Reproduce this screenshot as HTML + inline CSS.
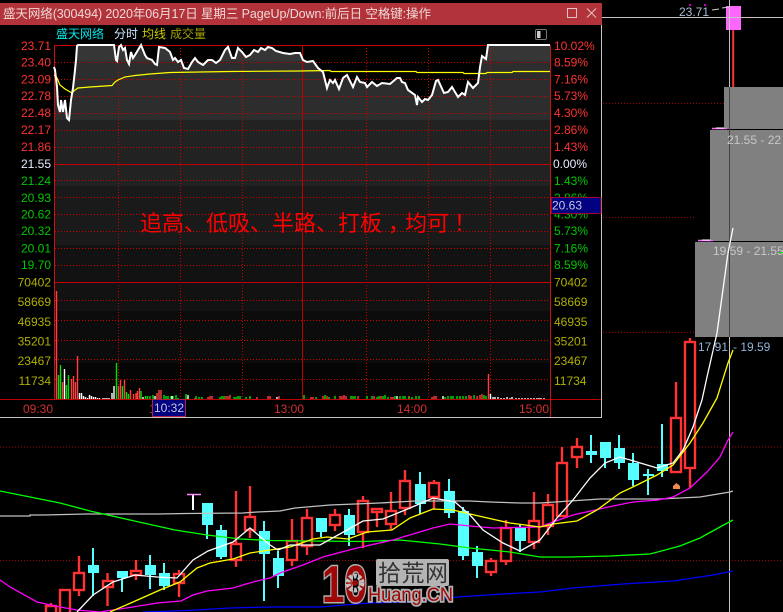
<!DOCTYPE html>
<html lang="zh"><head><meta charset="utf-8"><title>盛天网络</title>
<style>
html,body{margin:0;padding:0;background:#000;width:783px;height:612px;overflow:hidden}
svg{display:block;position:absolute;left:0;top:0}
text{font-family:"Liberation Sans","Noto Sans CJK SC",sans-serif;font-size:12px}
.l{text-anchor:end}
.r{fill:#ff3333}.g{fill:#00c800}.y{fill:#b0b000}
.cy{fill:#55ffff}
.cw{stroke:#55ffff;stroke-width:2}
.rw{stroke:#ff3333;stroke-width:2.400}
.ma{fill:none;stroke-width:1.300}
</style></head><body>
<svg width="783" height="612" viewBox="0 0 783 612" xmlns="http://www.w3.org/2000/svg" shape-rendering="auto">
<!-- grey stacked blocks -->
<g fill="#808080"><rect x="724" y="87" width="59" height="42"/><rect x="710" y="130" width="73" height="111"/><rect x="695" y="242" width="88" height="95"/></g>
<path d="M710 129.500H783M695 241.500H783" stroke="#000" stroke-width="1"/>
<path d="M712 128.500H727M698 240.500H713" stroke="#ff66ff" stroke-width="1.500"/>
<path d="M716 128H724M702 240H710" stroke="#fff" stroke-width="1"/>
<!-- main dotted lines -->
<path d="M603 103.500H724M603 217.500H695M603 332.500H695M0 447H783M0 560.500H783" stroke="#a00000" stroke-width="1" stroke-dasharray="1 2"/>
<!-- crosshair -->
<path d="M729.500 0V612" stroke="#c4c4c4" stroke-width="1"/>
<path d="M729.500 87V337" stroke="#444" stroke-width="1"/>
<path d="M602 17.500H783" stroke="#c4c4c4" stroke-width="1"/>
<!-- candles: wicks -->
<path class="rw" d="M51 603V612M65 590V612M79 556V596M107.500 573V606M136 560V580M179 570V597M236 491V567M250 486V538M292 519V566M307 509V555M335 509V531M363 496V548M377 509V527M391 492V530M405 470V515M434 480V509M491 558V576M506 520V565M534 492V549M548 494V535M562 447V516M577 438V468M676 382V418M690 338V488"/>
<path class="cw" d="M93 548V596M122 571V592M150 555V589M164 563V590M207 525V539M221 525V559M264 521V601M278 551V588M321 532V537M349 509V546M420 472V514M449 479V518M463 507V560M477 546V578M520 525V552M591 435V463M605 458V468M619 435V469M633 453V486M648 469V495M662 424V477"/>
<path d="M193 495V510" stroke="#fff" stroke-width="2"/>
<path d="M187 494.500H201" stroke="#ff88ff" stroke-width="1.500"/>
<!-- candles: cyan bodies -->
<g class="cy">
<rect x="88" y="565" width="11" height="8"/><rect x="117" y="571" width="11" height="7"/><rect x="145" y="565" width="11" height="10"/><rect x="159" y="573" width="11" height="13"/><rect x="202" y="503" width="11" height="22"/><rect x="216" y="530" width="11" height="27"/><rect x="259" y="531" width="11" height="23"/><rect x="273" y="558" width="11" height="18"/><rect x="316" y="518" width="11" height="14"/><rect x="344" y="515" width="11" height="20"/><rect x="415" y="484" width="11" height="20"/><rect x="444" y="491" width="11" height="22"/><rect x="458" y="511" width="11" height="45"/><rect x="472" y="552" width="11" height="14"/><rect x="515" y="528" width="11" height="13"/><rect x="586" y="451" width="11" height="4"/><rect x="600" y="442" width="11" height="16"/><rect x="614" y="448" width="11" height="15"/><rect x="628" y="463" width="11" height="17"/><rect x="643" y="474" width="11" height="2"/><rect x="657" y="464" width="11" height="7"/>
</g>
<!-- candles: hollow red bodies -->
<g fill="#000" stroke="#ff3333" stroke-width="2.400">
<rect x="46" y="606" width="10" height="10"/><rect x="60" y="590" width="10" height="26"/><rect x="74" y="573" width="10" height="17"/><rect x="103" y="581" width="10" height="6"/><rect x="131" y="571" width="10" height="4"/><rect x="174" y="574" width="10" height="9"/><rect x="231" y="544" width="10" height="16"/><rect x="245" y="517" width="10" height="13"/><rect x="287" y="541" width="10" height="19"/><rect x="302" y="518" width="10" height="28"/><rect x="330" y="515" width="10" height="10"/><rect x="358" y="501" width="10" height="31"/><rect x="372" y="509" width="10" height="3"/><rect x="386" y="511" width="10" height="13"/><rect x="400" y="481" width="10" height="27"/><rect x="429" y="483" width="10" height="14"/><rect x="486" y="561" width="10" height="11"/><rect x="501" y="528" width="10" height="33"/><rect x="529" y="521" width="10" height="21"/><rect x="543" y="505" width="10" height="21"/><rect x="557" y="463" width="10" height="53"/><rect x="572" y="447" width="10" height="10"/><rect x="671" y="418" width="10" height="54"/><rect x="685" y="342" width="10" height="126"/>
</g>
<polygon points="673,489 673,486 676.500,483 680,486 680,489" fill="#f08a50"/>
<!-- MAs -->
<polyline class="ma" stroke="#c0c0c0" points="0,516 30,516 30,515 44,515 86,514 158,514 186,513.500 243,513 257,512 280,511 295,508 330,505 380,503 415,501 470,501 490,502 520,503 540,503 600,499 660,499 700,497 730,492 733,491"/>
<polyline class="ma" stroke="#00ff00" points="0,491 30,497 60,503 90,511 130,520 175,530 207,535 240,539 270,540.500 310,541 365,541.500 400,540 440,544 470,548 510,552 540,557 570,557 610,556 650,554 680,546 700,538 720,527 733,520"/>
<polyline class="ma" stroke="#ff00ff" points="0,580 10,587 37,602 60,607 77,610 100,612 133,607 157,603 181,601 193,595 207,591 233,588 253,582 270,578 280,573 303,565 323,557 353,549 393,540 433,528 450,524 470,526 493,528 540,527 553,522 573,515 613,506 633,502 658,500 673,497 690,488 707,472 720,457 728,440 733,432"/>
<polyline class="ma" stroke="#0000ff" points="143,612 187,610.500 230,608 270,607 320,607 370,603 410,602 457,597 503,594 540,592 573,588 623,584 673,581 713,575 733,571"/>
<polyline class="ma" stroke="#ffff00" points="110,612 133,602 160,590 180,582 197,568 210,563 233,559 250,553 270,550 290,547 313,539 327,537 348,539 367,532 392,530 410,518 433,509 453,510 483,517 510,523 540,527 553,524 577,521 597,510 620,493 637,485 657,475 673,465 690,443 703,423 717,398 728,363 733,350"/>
<polyline class="ma" stroke="#ffffff" points="77,612 93,595 113,582 135,575 157,577 177,578 193,560 208,551 233,542 250,528 270,545 278,550 290,545 320,545 347,530 363,521 383,519 410,508 433,498 455,502 470,515 483,530 503,543 520,551 540,540 557,518 573,500 590,478 605,463 620,457 637,462 657,468 673,463 683,450 693,427 702,400 707,377 717,333 728,253 733,228"/>
<!-- top pink candle -->
<path d="M733.200 30V87" stroke="#ff3333" stroke-width="2"/>
<rect x="726" y="6" width="15" height="24" fill="#ff66ff"/>
<path d="M729.500 0V30" stroke="#c4c4c4"/><path d="M726 17.500H741" stroke="#c4c4c4"/>
<circle cx="690" cy="5" r="1" fill="#ff00ff"/><circle cx="705" cy="5" r="1" fill="#ff00ff"/>
<path d="M712 10L719 9M722 8L729 7" stroke="#ccc" stroke-width="1"/>
<text x="679" y="16" fill="#a9bdd4" style="font-size:12px">23.71</text>
<text x="727" y="144" fill="#c8c8c8">21.55 - 22</text>
<text x="713" y="255" fill="#c8c8c8">19.59 - 21.55</text>
<path d="M780 252.500H783" stroke="#0f0"/>
<text x="698" y="351" fill="#8fb4d8">17.91</text><text x="733" y="351" fill="#8fb4d8">- 19.59</text>

<!-- window -->
<rect x="0" y="25" width="601" height="392" fill="#000"/>
<rect x="0" y="3" width="602" height="22" fill="#b23339"/>
<path d="M601.500 25V418M0 417.500H602" stroke="#c4c4c4"/>
<text x="3" y="18" fill="#f0d8d8" style="font-size:12.500px" textLength="428" lengthAdjust="spacing">盛天网络(300494) 2020年06月17日 星期三 PageUp/Down:前后日 空格键:操作</text>
<rect x="567.500" y="8.500" width="9" height="9" fill="none" stroke="#e3c4c4"/>
<path d="M587 8.500L596 17.500M596 8.500L587 17.500" stroke="#e3c4c4"/>
<text x="56" y="38" fill="#00e8e8" textLength="48">盛天网络</text>
<text x="114" y="38" fill="#d0e8ff" textLength="24">分时</text>
<text x="142" y="38" fill="#cccc00" textLength="24">均线</text>
<text x="170" y="38" fill="#a0a000" textLength="36">成交量</text>
<rect x="535.500" y="29.500" width="11" height="10" rx="1.500" fill="none" stroke="#777"/>
<rect x="537" y="31" width="3.500" height="7" fill="#ccc"/>

<defs><clipPath id="area"><polygon points="54,67 55,70 57,87 58,105 60,112 61,100 63,112 65,100 67,118 69,120 71,100 73,88 75,70 76,60 77,46 78,45 114,45 116,60 117,61 119,47 121,45 123,50 125,48 127,60 129,64 131,52 133,58 135,55 138,50 141,45 145,55 147,58 152,60 155,64 157,65 159,47 165,48 170,52 173,60 175,58 178,62 181,60 184,68 188,69 192,62 195,58 198,62 203,65 208,60 212,60 216,63 220,60 225,50 228,47 232,58 235,58 238,48 242,52 246,57 250,55 254,50 258,52 261,48 265,50 268,47 272,48 276,51 283,53 290,54 295,53 300,53 303,60 307,62 313,61 318,68 323,72 327,88 328,85 330,80 333,83 335,80 339,89 343,78 347,75 353,87 357,77 360,82 365,83 367,87 372,82 377,86 382,83 390,84 397,78 400,78 402,82 405,83 408,90 415,95 417,105 418,97 422,102 425,99 428,100 432,95 436,81 438,80 444,93 448,92 452,87 458,97 462,93 465,95 468,82 473,88 478,83 480,67 482,56 486,59 488,45 550,45 550,399 54,399"/></clipPath></defs>
<g clip-path="url(#area)">
<rect x="55" y="45" width="495" height="16" fill="#363636"/><rect x="55" y="61" width="495" height="59" fill="#2d2d2d"/><rect x="55" y="120" width="495" height="66" fill="#222"/><rect x="55" y="186" width="495" height="59" fill="#1a1a1a"/><rect x="55" y="245" width="495" height="66" fill="#121212"/><rect x="55" y="311" width="495" height="52" fill="#0c0c0c"/><rect x="55" y="363" width="495" height="36" fill="#050505"/>
</g>
<!-- grid -->
<g stroke="#d00000" stroke-width="1" stroke-dasharray="1 2" fill="none">
<path d="M55 62.500H550M55 79.500H550M55 96.500H550M55 113.500H550M55 130.500H550M55 147.500H550M55 180.500H550M55 197.500H550M55 214.500H550M55 231.500H550M55 248.500H550M55 265.500H550M55 300.500H550M55 320.500H550M55 340.500H550M55 359.500H550M55 379.500H550"/>
<path d="M118.500 45V399M180.500 45V399M242.500 45V399M366.500 45V399M428.500 45V399M490.500 45V399"/>
</g>
<path d="M54 45.500H550M54 164.500H550M54 282.500H550M0 399.500H601M54.500 45V399M302.500 45V399M550.500 45V417" stroke="#c00000" stroke-width="1" fill="none"/>
<path d="M550.500 45V417M54.500 45V399" stroke="#d01010" stroke-width="1"/>
<!-- yellow avg, white price -->
<polyline fill="none" stroke="#ffff00" stroke-width="1.200" points="54,75 57,78 60,85 65,89 72,93 75,90 78,88 90,87 112,85.500 115,82 118,80 125,77 135,75.500 150,74 170,72.500 200,72 230,71.500 300,71 330,70.500 331,71.500 416,71.500 417,72.500 463,72.500 464,73.500 486,73.500 487,72.500 512,72.500 513,71.500 550,71.500"/>
<polyline fill="none" stroke="#ffffff" stroke-width="2" points="54,67 55,70 57,87 58,105 60,112 61,100 63,112 65,100 67,118 69,120 71,100 73,88 75,70 76,60 77,46 78,45 114,45 116,60 117,61 119,47 121,45 123,50 125,48 127,60 129,64 131,52 133,58 135,55 138,50 141,45 145,55 147,58 152,60 155,64 157,65 159,47 165,48 170,52 173,60 175,58 178,62 181,60 184,68 188,69 192,62 195,58 198,62 203,65 208,60 212,60 216,63 220,60 225,50 228,47 232,58 235,58 238,48 242,52 246,57 250,55 254,50 258,52 261,48 265,50 268,47 272,48 276,51 283,53 290,54 295,53 300,53 303,60 307,62 313,61 318,68 323,72 327,88 328,85 330,80 333,83 335,80 339,89 343,78 347,75 353,87 357,77 360,82 365,83 367,87 372,82 377,86 382,83 390,84 397,78 400,78 402,82 405,83 408,90 415,95 417,105 418,97 422,102 425,99 428,100 432,95 436,81 438,80 444,93 448,92 452,87 458,97 462,93 465,95 468,82 473,88 478,83 480,67 482,56 486,59 488,45 550,45"/>
<!-- volume bars -->
<path fill="none" stroke="#ff4040" stroke-width="1.400" d="M56.500 399V291M62.500 399V382M71.500 399V379M73.500 399V376M75.500 399V382M77.500 399V356M118.500 399V386M120.500 399V380M124.500 399V380M130.500 399V390M133.500 399V394M136 399V393M137.500 399V391M139.500 399V388M157 399V393M159 399V390M161 399V390M195 399V398M208 399V397M210 399V396M212 399V396M226 399V396M228 399V396M230 399V395M257 399V397M268 399V396M270 399V396M279 399V396M311 399V397M313 399V397M323 399V396M327 399V396M340 399V396M342 399V396M344 399V395M346 399V396M358 399V396M374 399V396M381 399V396M391 399V397M393 399V397M409 399V396M432 399V397M434 399V396M436 399V396M469 399V395M471 399V396M477 399V396M480 399V395M482 399V394M488.500 399V374"/>
<path fill="none" stroke="#00e000" stroke-width="1.400" d="M58.500 399V375M60.500 399V365M66.500 399V385M68.500 399V375M116.500 399V363M122.500 399V386M126.500 399V392M128.500 399V394M141 399V391M145.500 399V396M147.500 399V396M150 399V396M153 399V395M164 399V395M166 399V396M168 399V396M171 399V396M173 399V396M176 399V395M178 399V398M186 399V394M188 399V397M196 399V396M199 399V397M202 399V397M220 399V397M222 399V396M224 399V396M234 399V397M236 399V397M238 399V396M240 399V396M246 399V397M250 399V396M304 399V395M316 399V397M325 399V395M329 399V397M335 399V396M351 399V396M353 399V396M355 399V396M367 399V396M372 399V396M377 399V397M379 399V396M383 399V396M385 399V395M388 399V397M395 399V396M400 399V396M403 399V396M405 399V396M409 399V397M412 399V397M416 399V396M419 399V396M445 399V397M448 399V396M451 399V396M453 399V396M457 399V396M460 399V396M463 399V396M466 399V396M474 399V395M484 399V395M486 399V396"/>
<path fill="none" stroke="#ffffff" stroke-width="1.400" d="M64.500 399V369M79.500 399V393M81.500 399V393M83.500 399V396M85.500 399V397M87.500 399V398M89.500 399V395M91.500 399V396M93.500 399V397M95.500 399V397M97.500 399V398M99.500 399V398M103 399V398M105 399V398M107 399V398M109 399V398M112 399V393M114 399V386M143 399V397M155 399V396M172 399V396M188 399V395M277 399V397M397 399V396M443 399V396M490.500 399V394M493 399V397M495 399V397M498 399V397M501 399V398M504 399V398M507 399V397M510 399V398M512 399V397M516 399V398M519 399V398M522 399V398M525 399V398M528 399V398M531 399V398M534 399V398M537 399V398M539 399V398M541 399V398M544 399V398"/>
<!-- left labels -->
<g class="l">
<text class="l r" x="51" y="50">23.71</text><text class="l r" x="51" y="66.500">23.40</text><text class="l r" x="51" y="83.500">23.09</text><text class="l r" x="51" y="100">22.78</text><text class="l r" x="51" y="117">22.48</text><text class="l r" x="51" y="134">22.17</text><text class="l r" x="51" y="151">21.86</text>
<text class="l" x="51" y="168" fill="#e6ecff">21.55</text>
<text class="l g" x="51" y="185">21.24</text><text class="l g" x="51" y="202">20.93</text><text class="l g" x="51" y="218.500">20.62</text><text class="l g" x="51" y="235">20.32</text><text class="l g" x="51" y="252.500">20.01</text><text class="l g" x="51" y="269">19.70</text>
<text class="l y" x="51" y="286.500">70402</text><text class="l y" x="51" y="306">58669</text><text class="l y" x="51" y="326">46935</text><text class="l y" x="51" y="345.500">35201</text><text class="l y" x="51" y="365">23467</text><text class="l y" x="51" y="385">11734</text>
</g>
<!-- right labels -->
<text class="r" x="554" y="50">10.02%</text><text class="r" x="554" y="66.500">8.59%</text><text class="r" x="554" y="83.500">7.16%</text><text class="r" x="554" y="100">5.73%</text><text class="r" x="554" y="117">4.30%</text><text class="r" x="554" y="134">2.86%</text><text class="r" x="554" y="151">1.43%</text>
<text x="553" y="168" fill="#e6ecff">0.00%</text>
<text class="g" x="554" y="185">1.43%</text><text class="g" x="554" y="202">2.86%</text><text class="g" x="554" y="218.500">4.30%</text><text class="g" x="554" y="235">5.73%</text><text class="g" x="554" y="252.500">7.16%</text><text class="g" x="554" y="269">8.59%</text>
<text class="y" x="554" y="286.500">70402</text><text class="y" x="554" y="306">58669</text><text class="y" x="554" y="326">46935</text><text class="y" x="554" y="345.500">35201</text><text class="y" x="554" y="365">23467</text><text class="y" x="554" y="385">11734</text>
<rect x="551.500" y="197.500" width="49.500" height="16" fill="#000080" stroke="#a00030"/>
<text x="552" y="209.500" fill="#c8c8d8">20.63</text>
<!-- time axis -->
<g fill="#d03030"><text x="23" y="413" fill="#d03030">09:30</text><text x="149" y="413" fill="#d03030">1</text><text x="274" y="413" fill="#d03030">13:00</text><text x="397" y="413" fill="#d03030">14:00</text><text x="519" y="413" fill="#d03030">15:00</text></g>
<rect x="152.500" y="399.500" width="33" height="17" fill="#000080" stroke="#b02040"/>
<text x="154" y="412" fill="#c8c8d8">10:32</text>
<!-- annotation -->
<text x="140 162 184 206 228 250 272 294 316 338 360 388 405 427 454" y="231" fill="#ff0000" style="font-size:22px">追高、低吸、半路、打板，均可！</text>
<!-- watermark -->
<g>
<rect x="376" y="559" width="73" height="27" rx="2" fill="#b4b4b4"/>
<text x="378" y="581" fill="#333" style="font-size:23px" textLength="70">拾荒网</text>
<text x="322" y="602" style="font-size:52px;font-weight:bold;paint-order:stroke;stroke:#b0b0b0;stroke-width:3" fill="#a00808" textLength="45" lengthAdjust="spacingAndGlyphs">10</text>
<circle cx="355" cy="583" r="7" fill="none" stroke="#c0c0c0" stroke-width="5" stroke-dasharray="3 1.500"/>
<circle cx="355" cy="583" r="3" fill="#a00808"/>
<text x="368" y="601" style="font-size:19px;paint-order:stroke;stroke:#b0b0b0;stroke-width:3.500" fill="#a00808" textLength="85" lengthAdjust="spacingAndGlyphs">Huang.CN</text>
</g>
</svg>
</body></html>
